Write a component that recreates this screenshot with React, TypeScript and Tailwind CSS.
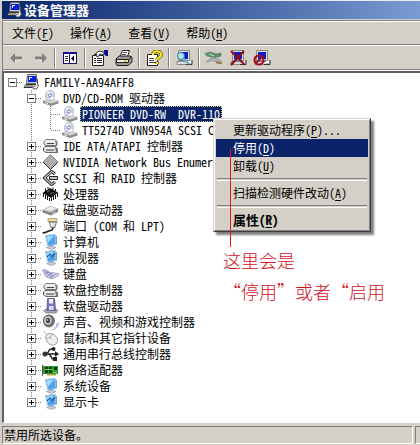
import type { ReactNode } from "react";

type IconProps = { children: ReactNode };

function Icon({ children }: IconProps) {
  return (
    <svg width="17" height="16" viewBox="0 0 17 16" className="shrink-0" aria-hidden="true">
      {children}
    </svg>
  );
}

const Pc = () => (
  <Icon>
    <path d="M4.500 .5h9v9h-10z" fill="#d0d0d0" stroke="#666" strokeWidth="1" />
    <path d="M5 2h8v6H5z" fill="#0820d8" />
    <path d="M6 3h3v1H7v2H6z" fill="#e8f4ff" />
    <path d="M3 10.500h10l1 3H1z" fill="#dcdcdc" stroke="#333" strokeWidth="1" />
    <path d="M3 12h7" stroke="#555" />
    <path d="M14.500 5v5l1 2-2 3h-3l-1-1.500 3-2" fill="#ececec" stroke="#555" strokeWidth="1" />
  </Icon>
);

const Disc = () => (
  <Icon>
    <path d="M1 10.500L9 8l7.500 3v2.500L9 16l-8-3z" fill="#8a8a8a" />
    <path d="M1 10.500L9 8l7.500 3L9 13.500z" fill="#d8d8d8" />
    <ellipse cx="8" cy="5.500" rx="4.500" ry="5.500" fill="#d5daea" stroke="#a4a9b8" strokeWidth=".8" />
    <path d="M8 5.500L4.500 2.500 7 .8zM8 5.500l4 2.500-3 2.500z" fill="#fff" />
    <circle cx="8" cy="5.500" r="1.500" fill="#fff" stroke="#6a7fc8" strokeWidth="1" />
    <path d="M3 12.500l3 1.200" stroke="#f4f4f4" />
  </Icon>
);

const Controller = () => (
  <Icon>
    <path d="M4 1.500h9l2 2v4h-11l-2-1v-3z" fill="#e6e6e2" stroke="#777" />
    <path d="M3 8.500h10l2.500 2v4H4l-2.500-1.500v-3z" fill="#dcdcd8" stroke="#666" />
    <path d="M3 10h9M4 3h8" stroke="#fff" />
    <path d="M4 12h8M5 5.500h7" stroke="#444" />
    <path d="M13 9l3 2v4l-2-1zM13 2l2 2v3h-1z" fill="#777" />
  </Icon>
);

const Diamond = () => (
  <Icon>
    <path d="M8.500 .5L16 8l-7.500 7.500L1 8z" fill="#adadad" stroke="#888" />
    <path d="M1 8l7.500 7.500L16 8" fill="none" stroke="#333" />
  </Icon>
);

const Scsi = () => (
  <Icon>
    <path d="M13 4L9.500 1.500 2.500 8l7 6.500L13 12" fill="none" stroke="#222" strokeWidth="3" />
    <path d="M13 4L9.500 1.500 2.500 8l7 6.500L13 12" fill="none" stroke="#c4c4c4" strokeWidth="1.200" />
    <path d="M7.500 6.500h8v3h-8z" fill="#c4c4c4" stroke="#222" />
  </Icon>
);

const Chip = () => (
  <Icon>
    <path d="M8 2l8 4.500-7 5.500-8.500-5z" fill="#111" />
    <path d="M1.500 7v4M3.500 9v4M5.500 10v4M7.500 12v3M9.500 12v3M11.500 10v4M13.500 9v4M15.500 7v4M3.500 5V2.500M6 3V1M11 4V1.500M13.500 5V3" stroke="#111" />
    <path d="M5 6l3-1.500M8 8l4-2" stroke="#888" strokeWidth=".8" />
  </Icon>
);

const Drive = () => (
  <Icon>
    <path d="M.5 8L8 4l8 2.500v3.500l-7 3.500-8.500-3z" fill="#858585" />
    <path d="M.5 8L8 4l8 2.500L9 10.500z" fill="#d0d0d0" />
    <path d="M4 7.500L9 5l4 1.200L8 8.500z" fill="#f0f0f0" />
    <path d="M10 12l4-2" stroke="#ccc" />
  </Icon>
);

const Port = () => (
  <Icon>
    <path d="M6 .5h9v3H6z" fill="#ecdf9a" stroke="#a39860" strokeWidth=".8" />
    <path d="M7 4h7.500L13 9.500H9z" fill="#e0e0e0" stroke="#555" strokeWidth=".8" />
    <path d="M11 9.500c0 3-2 3-4 3.500s-3 2-6.500 2" fill="none" stroke="#222" strokeWidth="1.500" />
    <path d="M9.500 5v3" stroke="#fff" />
  </Icon>
);

const Monitor = ({ display = false }: { display?: boolean }) => (
  <Icon>
    <path d="M3.500 1.500l9.500-1 1 10-8 1.500z" fill="#4aa4f0" stroke="#9fbfe0" />
    <path d="M4.500 2.500l7.500-1-6 7z" fill="#a6dcff" />
    {display && <path d="M5 7l3-3 2 3 3-3.500" fill="none" stroke="#1a66a8" strokeWidth="1.200" />}
    <path d="M13.500 1l1.500 1v8l-1 .5z" fill="#8d99b8" />
    <path d="M8 11.500h3v2H8z" fill="#999" />
    <path d="M4.500 13.500l5-1.500 4.500 1.500-4.500 2z" fill="#cfd0dc" stroke="#8e90a4" strokeWidth=".7" />
  </Icon>
);

const Keyboard = () => (
  <Icon>
    <path d="M.5 4L3 3.500l5 3 8.500 1v2L10 13l-6-2z" fill="#d4d5ec" stroke="#8c8db4" strokeWidth=".8" />
    <path d="M2 5l8 6.500M4 5l8 5.500M3 7.500l4-1.500M5 10l6-3M7.500 11.500l6-3" stroke="#8384b0" strokeWidth=".8" />
  </Icon>
);

const Floppy = () => (
  <Icon>
    <path d="M1.500 12.500l4-2h8l2.500 2-2 2.500H4z" fill="#aaa" stroke="#777" strokeWidth=".7" />
    <path d="M5.500 .5h7l1 12H5z" fill="#7777bd" stroke="#50508c" strokeWidth=".8" />
    <path d="M7 1h4v4.500H7z" fill="#f0f0f6" />
    <path d="M7 8h4.500v4H7z" fill="#d8d8ef" />
  </Icon>
);

const Speaker = () => (
  <Icon>
    <ellipse cx="7" cy="7" rx="6" ry="6.500" fill="#777" />
    <ellipse cx="6" cy="6.500" rx="4.500" ry="5" fill="#c8c8c8" stroke="#555" />
    <ellipse cx="6" cy="6.500" rx="2.200" ry="2.700" fill="#4a4a4a" />
    <circle cx="5.500" cy="6" r=".8" fill="#ddd" />
    <path d="M12 14c2-1 3-2 3-5M10 15.500c4 0 6.500-3 6.500-7" stroke="#a4aae0" fill="none" />
  </Icon>
);

const Mouse = () => (
  <Icon>
    <path d="M3 1C1 2 4 4 6 5" stroke="#aaa" fill="none" />
    <path d="M5 4.500c5-3 10.500 2 10.500 6s-4.500 5.500-7.500 4-6-8-3-10z" fill="#efefef" stroke="#999" />
    <path d="M4.500 8.500c3 0 5-2 5.500-5M7.500 6.500l2 3" fill="none" stroke="#aaa" />
  </Icon>
);

const Usb = () => (
  <Icon>
    <path d="M1 8h13M4 8c3 0 2-5 5-5h2M6 8c3 0 3 5 5 5h1" fill="none" stroke="#222" strokeWidth="1.500" />
    <circle cx="3" cy="8" r="2.500" fill="#333" />
    <path d="M13 5l4 3-4 3z" fill="#222" />
    <circle cx="11.500" cy="3" r="2" fill="#222" />
    <path d="M11 11h4v4h-4z" fill="#222" />
  </Icon>
);

const Network = () => (
  <Icon>
    <path d="M1 4h15v8H1z" fill="#2c9a2c" />
    <path d="M.5 3v11" stroke="#555" />
    <path d="M3 5h3v2H3zM3 8h3v3H3zM7 5h3v2H7zM7 8h3v3H7zM12 5h3v3h-3z" fill="#0c3d0c" />
    <path d="M3 7.500h8M11 10.500h4" stroke="#77d45f" />
    <path d="M5 12h9v1.500H5z" fill="#b4a640" />
  </Icon>
);

type Node = { level: number; label: string; icon: ReactNode; open?: boolean; selected?: boolean; last?: boolean };

const nodes: Node[] = [
  { level: 0, label: "FAMILY-AA94AFF8", icon: <Pc />, open: true },
  { level: 1, label: "DVD/CD-ROM 驱动器", icon: <Disc />, open: true },
  { level: 2, label: "PIONEER DVD-RW  DVR-110", icon: <Disc />, selected: true },
  { level: 2, label: "TT5274D VNN954A SCSI C", icon: <Disc />, last: true },
  { level: 1, label: "IDE ATA/ATAPI 控制器", icon: <Controller /> },
  { level: 1, label: "NVIDIA Network Bus Enumer", icon: <Diamond /> },
  { level: 1, label: "SCSI 和 RAID 控制器", icon: <Scsi /> },
  { level: 1, label: "处理器", icon: <Chip /> },
  { level: 1, label: "磁盘驱动器", icon: <Drive /> },
  { level: 1, label: "端口 (COM 和 LPT)", icon: <Port /> },
  { level: 1, label: "计算机", icon: <Monitor /> },
  { level: 1, label: "监视器", icon: <Monitor display /> },
  { level: 1, label: "键盘", icon: <Keyboard /> },
  { level: 1, label: "软盘控制器", icon: <Controller /> },
  { level: 1, label: "软盘驱动器", icon: <Floppy /> },
  { level: 1, label: "声音、视频和游戏控制器", icon: <Speaker /> },
  { level: 1, label: "鼠标和其它指针设备", icon: <Mouse /> },
  { level: 1, label: "通用串行总线控制器", icon: <Usb /> },
  { level: 1, label: "网络适配器", icon: <Network /> },
  { level: 1, label: "系统设备", icon: <Monitor /> },
  { level: 1, label: "显示卡", icon: <Monitor display />, last: true },
];

type BranchProps = { up?: boolean; down?: boolean; across?: boolean; box?: boolean; open?: boolean };

function Branch({ up, down, across, box, open }: BranchProps) {
  return (
    <svg width="19" height="16" viewBox="0 0 19 16" shapeRendering="crispEdges" className="block shrink-0" aria-hidden="true">
      <g stroke="#808080" strokeDasharray="1 1">
        {up && <path d="M8.500 0v8" />}
        {down && <path d="M8.500 8v8" />}
        {across && <path d="M9 8.500h10" />}
      </g>
      {box && <path d="M4.500 4.500h8v8h-8z" fill="#fff" stroke="#808080" />}
      {box && <path d={open ? "M6 8.500h5" : "M6 8.500h5M8.500 6v5"} stroke="#000" />}
    </svg>
  );
}

function TreeRow({ node }: { node: Node }) {
  const { level, label, icon, open, selected, last } = node;
  return (
    <li className="flex h-4 items-center">
      {level > 0 && <span className="w-[19px] shrink-0" />}
      {level > 1 && <Branch up down />}
      {level === 2 ? (
        <Branch up down={!last} across />
      ) : (
        <button type="button" aria-label={label} aria-expanded={!!open} className="shrink-0">
          <Branch up={level === 1} down={level === 1 && !last} across box open={open} />
        </button>
      )}
      {icon}
      <span
        className={
          selected
            ? "ml-[2px] bg-[#0a246a] px-[2px] leading-4 whitespace-pre text-white outline-1 -outline-offset-1 outline-dotted outline-[#d8c878]"
            : "ml-[2px] px-[2px] leading-4 whitespace-pre"
        }
      >
        {label}
      </span>
    </li>
  );
}

function Key({ text, k, tail = "" }: { text: string; k: string; tail?: string }) {
  return (
    <>
      {text}(<u className="underline-offset-2">{k}</u>){tail}
    </>
  );
}

function Tool({ label, children }: { label: string; children: ReactNode }) {
  return (
    <button type="button" aria-label={label} className="flex h-5 w-6 shrink-0 items-center justify-center">
      <svg width="20" height="16" viewBox="0 0 20 16" aria-hidden="true">
        {children}
      </svg>
    </button>
  );
}

const Divider = () => <span className="mx-[2px] h-5 w-[2px] shrink-0 border-r border-l border-r-white border-l-[#808080]" />;

function SmallPc() {
  return (
    <>
      <path d="M4.500 .5h11v10h-11z" fill="#e0e0e0" stroke="#888" />
      <path d="M6 2h8v7H6z" fill="#1018d0" />
      <path d="M3 11.500h12v3H3z" fill="#ddd" stroke="#888" />
      <path d="M12 14.500h6V10" fill="none" stroke="#333" />
      <path d="M14 11h3v2h-3z" fill="#fff" />
    </>
  );
}

function Toolbar() {
  return (
    <div role="toolbar" className="flex h-6 items-center border-t border-white pl-px">
      <Tool label="后退">
        <path d="M4 8l5-5v3.500h7v3H9V13z" fill="#808080" />
        <path d="M9.500 13V10H16" fill="none" stroke="#fff" strokeWidth=".6" />
      </Tool>
      <Tool label="前进">
        <path d="M17 8l-5-5v3.500H5v3h7V13z" fill="#808080" />
        <path d="M5 10h6.500v3" fill="none" stroke="#fff" strokeWidth=".6" />
      </Tool>
      <Divider />
      <Tool label="显示/隐藏控制台树">
        <g shapeRendering="crispEdges">
          <path d="M3.500 2.500h13v11h-13z" fill="#fff" stroke="#10106a" />
          <path d="M3 2h14v2H3z" fill="#10108c" />
          <path d="M9.500 4v9" stroke="#10106a" />
          <path d="M5 6.500h3M5 8.500h3M5 10.500h3" stroke="#333" />
        </g>
        <path d="M14 5.500v6l-3-3z" fill="#000" />
      </Tool>
      <Divider />
      <Tool label="属性">
        <path d="M2.500 5.500h11v10h-11z" fill="#fff" stroke="#222" />
        <path d="M4 8.500h2M7 8.500h5M4 10.500h2M7 10.500h5M4 12.500h2M7 12.500h5" stroke="#222" />
        <path d="M4 5l5-4 5 1v3l-4-1-2 3-2-1 1-2z" fill="#eee" stroke="#333" />
        <path d="M14 0h4v6h-2l-2-2z" fill="#10108c" />
      </Tool>
      <Tool label="打印">
        <path d="M8.500 .5h7l-2 6H6z" fill="#fff" stroke="#222" />
        <path d="M9 2.500h4M8 4.500h4" stroke="#555" />
        <path d="M2 9l3-3h11l2 1.500V12l-4 3.500H3L2 14z" fill="#999" stroke="#222" />
        <path d="M2.500 9.500h12v3h-12zM14.500 9.500l3.500-3" fill="#eee" stroke="#222" />
        <path d="M10.500 11h2" stroke="#d4c800" strokeWidth="2" />
      </Tool>
      <Divider />
      <Tool label="帮助">
        <path d="M3.500 4.500h10v11h-10z" fill="#fff" stroke="#222" />
        <path d="M5 8.500h5M5 10.500h5M5 12.500h7" stroke="#444" />
        <path d="M9 5c0-5 8-5 8 0 0 3-4 2-4 5M13 11.500v2.500" fill="none" stroke="#4c4c00" strokeWidth="3.500" />
        <path d="M9 5c0-5 8-5 8 0 0 3-4 2-4 5M13 12v2" fill="none" stroke="#ffe818" strokeWidth="2.200" />
      </Tool>
      <Divider />
      <Tool label="扫描检测硬件改动">
        <SmallPc />
        <circle cx="7" cy="6" r="3.500" fill="#a4e8f0" stroke="#3a7898" />
        <path d="M9 8l6 6" stroke="#58b4d8" strokeWidth="2" />
      </Tool>
      <Divider />
      <Tool label="更新驱动程序">
        <path d="M1 3.500l5-1.500 6 2 5-1v3l-6 1.500L3 6z" fill="#58946a" stroke="#56745c" strokeWidth=".7" />
        <path d="M5 4l5 2" stroke="#c8e0c8" />
        <path d="M2 12l5-4 7 1 3 2-6 .5-3-1z" fill="#b4b4b0" stroke="#888" strokeWidth=".7" />
        <path d="M11 11l7 1v2h-5z" fill="#9c8462" />
      </Tool>
      <Tool label="卸载">
        <SmallPc />
        <path d="M3 1l13 13M16 1L3 15" stroke="#8c1018" strokeWidth="2.200" />
      </Tool>
      <Tool label="停用">
        <SmallPc />
        <circle cx="7" cy="10" r="4.500" fill="none" stroke="#9c1020" strokeWidth="2.200" />
        <path d="M4 13l6-6" stroke="#9c1020" strokeWidth="2" />
      </Tool>
    </div>
  );
}

const menus = [
  ["文件", "F"],
  ["操作", "A"],
  ["查看", "V"],
  ["帮助", "H"],
];

const itemClass = "flex h-[18px] w-full items-center pl-[17px] whitespace-pre";
const Rule = () => <hr className="mx-px my-[3px] h-[3px] border-t border-b border-t-[#808080] border-b-white" />;

function ContextMenu() {
  return (
    <div
      role="menu"
      className="absolute top-[117px] left-[213px] w-[158px] border border-t-[#d4d0c8] border-r-[#404040] border-b-[#404040] border-l-[#d4d0c8] bg-[#d4d0c8] shadow-[3px_3px_2px_#00000080]"
    >
      <div className="border border-t-white border-r-[#808080] border-b-[#808080] border-l-white p-px">
        <button type="button" role="menuitem" className={itemClass}>
          <span><Key text="更新驱动程序" k="P" tail="..." /></span>
        </button>
        <button type="button" role="menuitem" className={itemClass + " bg-[#0a246a] text-white"}>
          <span><Key text="停用" k="D" /></span>
        </button>
        <button type="button" role="menuitem" className={itemClass}>
          <span><Key text="卸载" k="U" /></span>
        </button>
        <Rule />
        <button type="button" role="menuitem" className={itemClass}>
          <span><Key text="扫描检测硬件改动" k="A" /></span>
        </button>
        <Rule />
        <button type="button" role="menuitem" className={itemClass + " text-[13px] font-bold"}>
          <span><Key text="属性" k="R" /></span>
        </button>
      </div>
    </div>
  );
}

export default function App() {
  return (
    <div className="relative flex min-h-screen flex-col overflow-hidden border-t border-[#e4eef0] bg-[#d4d0c8] pl-[2px] font-['Noto_Sans_CJK_SC',sans-serif] text-[12px] leading-4 text-black [font-feature-settings:'hwid']">
      <header className="flex h-[18px] items-center gap-px bg-linear-to-r from-[#0a246a] to-[#7a9bd2] pl-1 text-white">
        <Pc />
        <h1 className="text-[13px] font-bold">设备管理器</h1>
      </header>
      <div className="mt-px border-t border-l border-[#808080]">
        <nav className="flex h-6 items-center gap-4 border-t border-b border-t-white border-b-[#808080] pl-[9px]">
          {menus.map(([text, k]) => (
            <button type="button" key={k}>
              <Key text={text} k={k} />
            </button>
          ))}
        </nav>
        <Toolbar />
        <div className="border-t border-b border-t-[#808080] border-b-white" />
      </div>
      <main className="flex-1 border-t-2 border-b border-l-2 border-t-[#606060] border-b-white border-l-[#606060] bg-white pt-px">
        <ul>
          {nodes.map((node) => (
            <TreeRow key={node.label} node={node} />
          ))}
        </ul>
      </main>
      <footer className="flex gap-[2px] pt-[3px] pb-px">
        <p className="h-[18px] flex-1 border border-t-[#808080] border-r-white border-b-white border-l-[#808080] pl-px">禁用所选设备。</p>
        <span className="w-[5px] border-t border-b border-l border-t-[#808080] border-b-white border-l-[#808080]" />
      </footer>
      <ContextMenu />
      <div className="absolute top-[148px] left-[230px] h-[98px] w-px bg-[#e01818]" />
      <p className="absolute top-[244px] left-[223px] text-[18px] leading-[31px] font-light whitespace-nowrap text-[#d0101c]">
        这里会是
        <br />
        “停用”或者“启用
      </p>
    </div>
  );
}
